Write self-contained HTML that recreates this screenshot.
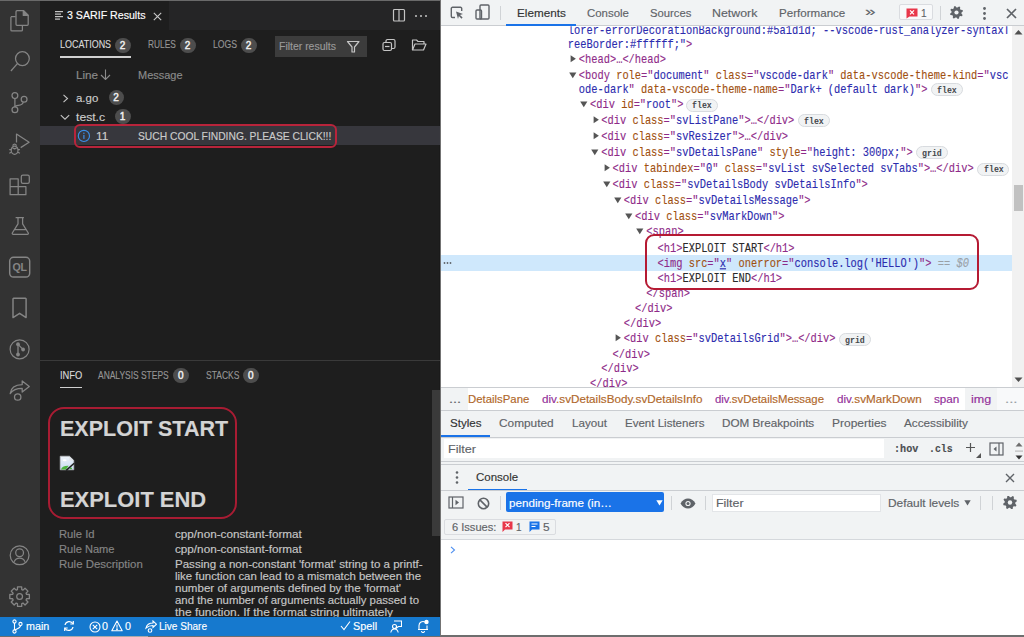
<!DOCTYPE html>
<html><head><meta charset="utf-8"><title>SARIF DevTools</title>
<style>
html,body{margin:0;padding:0;}
body{width:1024px;height:637px;overflow:hidden;position:relative;background:#ffffff;font-family:"Liberation Sans",sans-serif;}
</style></head><body>
<div style="position:absolute;left:0px;top:0px;width:441px;height:637px;background:#1e1e1e;"></div>
<div style="position:absolute;left:0px;top:0px;width:441px;height:1px;background:#6a6a6a;"></div>
<div style="position:absolute;left:0px;top:1px;width:40px;height:616px;background:#333333;"></div>
<div style="position:absolute;left:40px;top:1px;width:401px;height:29px;background:#252526;"></div>
<div style="position:absolute;left:40px;top:1px;width:129px;height:29px;background:#1e1e1e;"></div>
<div style="position:absolute;left:439px;top:30px;width:1px;height:587px;background:#1a1a1a;"></div>
<svg style="position:absolute;left:0px;top:0px;" width="40" height="637" viewBox="0 0 40 637">
<g fill="none" stroke="#858585" stroke-width="1.25" stroke-linejoin="round">
<path d="M11 16.6h4.6M10.9 16.7v13.2a1 1 0 0 0 1 1h9.5a1 1 0 0 0 1-1v-4.7"/>
<path d="M17 10.7h6.7l4.5 4.4v9.2a1 1 0 0 1-1 1h-10.2a1 1 0 0 1-1-1v-12.6a1 1 0 0 1 1-1z"/>
<path d="M23.3 11v4.4h4.6z" fill="#858585"/>
<circle cx="22.4" cy="58.6" r="6.9"/>
<path d="M17.6 63.3L10.9 71"/>
<circle cx="14.9" cy="95.6" r="2.9"/>
<circle cx="14.9" cy="109.8" r="2.9"/>
<circle cx="24.1" cy="99.3" r="2.9"/>
<path d="M14.9 98.5v8.4M23.3 102.1c-.6 2.4-2.5 3-5 3.3-2 .2-3.2.7-3.4 1.5"/>
<path d="M16.5 142.5v-8.4l12.6 8.2-8.4 5.3"/>
<ellipse cx="14.6" cy="150.3" rx="3.4" ry="4.1"/>
<path d="M11.8 147.5l2.8 1.4 2.8-1.4M9.3 149.5h2M9.3 153.2l2-1M19.9 149.5h-2M19.9 153.2l-2-1M12.6 145.6c.6-1 1.2-1.4 2-1.4s1.4.4 2 1.4"/>
<path d="M10.1 186.7h8.1v8h-8.1zM10.1 178.9h8.1v7.8h-8.1zM18.2 186.7h7.7v8h-7.7z"/>
<rect x="21.3" y="175.2" width="8" height="8.2" rx="1.6"/>
<path d="M15.6 217.6h8.3M18 217.8v6L12.3 233a1 1 0 0 0 .9 1.4h14.2a1 1 0 0 0 .9-1.4l-5.7-9.2v-6M14.6 229.5h11.4"/>
<rect x="9.7" y="257.3" width="20" height="19.8" rx="3.8" stroke-width="1.45"/>
<path d="M13.6 298.3h11.9a.6.6 0 0 1 .6.6v18.7l-6.5-4.3-6.6 4.3v-18.7a.6.6 0 0 1 .6-.6z" stroke-width="1.45"/>
<circle cx="19.6" cy="349.3" r="9.5" stroke-width="1.2"/>
<path d="M18 344.2v10.3M18 344.4l5 5" stroke-width="1.3"/>
<path d="M10.2 393.6c.6-5.6 5-8.9 12-9v-3.7l7.1 5.5-7.1 5.6v-3.6c-5.5 0-9.4 1.5-12 5.2z" stroke-width="1.3"/>
<circle cx="17.7" cy="397" r="3.2" stroke-width="1.3"/>
<circle cx="19.6" cy="555.3" r="9.4"/>
<circle cx="19.6" cy="552.8" r="3.9"/>
<path d="M14.2 561.7c1-2.4 3-3.7 5.4-3.7s4.4 1.3 5.4 3.7"/>
<polygon points="17.44,589.63 17.52,586.82 21.68,586.82 21.76,589.63 23.01,590.14 25.04,588.21 27.99,591.16 26.06,593.19 26.57,594.44 29.38,594.52 29.38,598.68 26.57,598.76 26.06,600.01 27.99,602.04 25.04,604.99 23.01,603.06 21.76,603.57 21.68,606.38 17.52,606.38 17.44,603.57 16.19,603.06 14.16,604.99 11.21,602.04 13.14,600.01 12.63,598.76 9.82,598.68 9.82,594.52 12.63,594.44 13.14,593.19 11.21,591.16 14.16,588.21 16.19,590.14" stroke-width="1.3"/>
<circle cx="19.6" cy="596.6" r="2.9"/>
</g>
<g fill="#858585"><circle cx="18" cy="344.2" r="1.9"/><circle cx="18" cy="354.5" r="1.9"/><circle cx="23.1" cy="349.5" r="1.9"/></g>
<text x="19.7" y="271.2" text-anchor="middle" font-family="Liberation Sans" font-weight="bold" font-size="10.6" fill="#858585" letter-spacing="-0.2">QL</text>
</svg>
<svg style="position:absolute;left:55px;top:11px;" width="9" height="9" viewBox="0 0 9 9"><g fill="#c5c5c5"><rect x="0" y="0" width="8" height="1.2"/><rect x="0" y="2.5" width="6" height="1.2"/><rect x="0" y="5" width="8" height="1.2"/><rect x="0" y="7.5" width="5" height="1.2"/></g></svg>
<div style="position:absolute;left:67.16px;top:9.25px;white-space:pre;line-height:normal;font-family:'Liberation Sans',sans-serif;font-size:10.6px;font-weight:400;color:#ffffff;-webkit-text-stroke:0.15px;transform:scaleX(1.0020);transform-origin:0 0;">3 SARIF Results</div>
<svg style="position:absolute;left:152.5px;top:11.5px;" width="9" height="9" viewBox="0 0 9 9"><path d="M0.8 0.8l7.4 7.4M8.2 0.8l-7.4 7.4" stroke="#c8c8c8" stroke-width="1.1"/></svg>
<svg style="position:absolute;left:392px;top:8px;" width="14" height="14" viewBox="0 0 14 14"><g fill="none" stroke="#c5c5c5" stroke-width="1.2"><rect x="1.5" y="1.5" width="11" height="11.5" rx="1"/><path d="M7 1.5v11.5"/></g></svg>
<svg style="position:absolute;left:414px;top:14px;" width="14" height="4" viewBox="0 0 14 4"><g fill="#c5c5c5"><circle cx="2" cy="2" r="1"/><circle cx="7" cy="2" r="1"/><circle cx="12" cy="2" r="1"/></g></svg>
<div style="position:absolute;left:59.86px;top:38.25px;white-space:pre;line-height:normal;font-family:'Liberation Sans',sans-serif;font-size:10.6px;font-weight:400;color:#dadada;-webkit-text-stroke:0.15px;transform:scaleX(0.8450);transform-origin:0 0;-webkit-text-stroke:0.12px">LOCATIONS</div>
<div style="position:absolute;left:60px;top:56.3px;width:71px;height:1.6px;background:#d0d0d0;"></div>
<div style="position:absolute;left:147.86px;top:38.25px;white-space:pre;line-height:normal;font-family:'Liberation Sans',sans-serif;font-size:10.6px;font-weight:400;color:#969696;-webkit-text-stroke:0.15px;transform:scaleX(0.7861);transform-origin:0 0;-webkit-text-stroke:0.12px">RULES</div>
<div style="position:absolute;left:212.86px;top:38.25px;white-space:pre;line-height:normal;font-family:'Liberation Sans',sans-serif;font-size:10.6px;font-weight:400;color:#969696;-webkit-text-stroke:0.15px;transform:scaleX(0.8207);transform-origin:0 0;-webkit-text-stroke:0.12px">LOGS</div>
<div style="position:absolute;left:115.25px;top:37.55px;width:15.5px;height:15.5px;background:#4d4d4d;border-radius:50%"></div>
<div style="position:absolute;left:119.80px;top:39.70px;white-space:pre;line-height:normal;font-family:'Liberation Sans',sans-serif;font-size:10px;font-weight:400;color:#f0f0f0;-webkit-text-stroke:0.15px;-webkit-text-stroke:0.45px">2</div>
<div style="position:absolute;left:180.25px;top:37.55px;width:15.5px;height:15.5px;background:#4d4d4d;border-radius:50%"></div>
<div style="position:absolute;left:184.80px;top:39.70px;white-space:pre;line-height:normal;font-family:'Liberation Sans',sans-serif;font-size:10px;font-weight:400;color:#f0f0f0;-webkit-text-stroke:0.15px;-webkit-text-stroke:0.45px">2</div>
<div style="position:absolute;left:241.25px;top:37.55px;width:15.5px;height:15.5px;background:#4d4d4d;border-radius:50%"></div>
<div style="position:absolute;left:245.80px;top:39.70px;white-space:pre;line-height:normal;font-family:'Liberation Sans',sans-serif;font-size:10px;font-weight:400;color:#f0f0f0;-webkit-text-stroke:0.15px;-webkit-text-stroke:0.45px">2</div>
<div style="position:absolute;left:275px;top:36px;width:92px;height:21px;background:#3c3c3c;"></div>
<div style="position:absolute;left:279.34px;top:39.58px;white-space:pre;line-height:normal;font-family:'Liberation Sans',sans-serif;font-size:11px;font-weight:400;color:#9a9a9a;-webkit-text-stroke:0.15px;transform:scaleX(0.9502);transform-origin:0 0;">Filter results</div>
<svg style="position:absolute;left:346px;top:40px;" width="15" height="13" viewBox="0 0 15 13"><path d="M1.5 1.5h11.5l-4.5 5.5v5h-2.5v-5z" fill="none" stroke="#c5c5c5" stroke-width="1.2" stroke-linejoin="round"/></svg>
<svg style="position:absolute;left:382px;top:38px;" width="14" height="14" viewBox="0 0 14 14"><g fill="none" stroke="#c5c5c5" stroke-width="1.2"><rect x="1" y="4.5" width="8.5" height="8" rx="1.5"/><path d="M4 4.5v-1.5a1.5 1.5 0 0 1 1.5-1.5h6a1.5 1.5 0 0 1 1.5 1.5v6a1.5 1.5 0 0 1-1.5 1.5h-2"/><path d="M3 8.5h4.5"/></g></svg>
<svg style="position:absolute;left:411px;top:38px;" width="16" height="14" viewBox="0 0 16 14"><g fill="none" stroke="#c5c5c5" stroke-width="1.2" stroke-linejoin="round"><path d="M1.5 12V2h4l1.5 1.5h6v2.5"/><path d="M1.5 12l2.5-6h11l-2.5 6z"/></g></svg>
<div style="position:absolute;left:76.36px;top:69.25px;white-space:pre;line-height:normal;font-family:'Liberation Sans',sans-serif;font-size:10.6px;font-weight:400;color:#8b8b8b;-webkit-text-stroke:0.15px;transform:scaleX(1.1019);transform-origin:0 0;">Line</div>
<svg style="position:absolute;left:100px;top:69px;" width="11" height="11" viewBox="0 0 11 11"><g fill="none" stroke="#8b8b8b" stroke-width="1.1"><path d="M5.5 0.5v10M1 6l4.5 4.5L10 6"/></g></svg>
<div style="position:absolute;left:138.11px;top:69.25px;white-space:pre;line-height:normal;font-family:'Liberation Sans',sans-serif;font-size:10.6px;font-weight:400;color:#8b8b8b;-webkit-text-stroke:0.15px;transform:scaleX(1.0354);transform-origin:0 0;">Message</div>
<svg style="position:absolute;left:62px;top:94px;" width="7" height="9" viewBox="0 0 7 9"><path d="M1.5 0.8l4 3.7-4 3.7" fill="none" stroke="#c5c5c5" stroke-width="1.1"/></svg>
<div style="position:absolute;left:76.36px;top:92.25px;white-space:pre;line-height:normal;font-family:'Liberation Sans',sans-serif;font-size:10.6px;font-weight:400;color:#cccccc;-webkit-text-stroke:0.15px;transform:scaleX(1.0799);transform-origin:0 0;">a.go</div>
<div style="position:absolute;left:108.65px;top:89.75px;width:15.5px;height:15.5px;background:#4d4d4d;border-radius:50%"></div>
<div style="position:absolute;left:113.20px;top:91.90px;white-space:pre;line-height:normal;font-family:'Liberation Sans',sans-serif;font-size:10px;font-weight:400;color:#f0f0f0;-webkit-text-stroke:0.15px;-webkit-text-stroke:0.45px">2</div>
<svg style="position:absolute;left:60px;top:114px;" width="10" height="7" viewBox="0 0 10 7"><path d="M0.8 1.2l4.2 4 4.2-4" fill="none" stroke="#c5c5c5" stroke-width="1.1"/></svg>
<div style="position:absolute;left:76.36px;top:110.85px;white-space:pre;line-height:normal;font-family:'Liberation Sans',sans-serif;font-size:10.6px;font-weight:400;color:#cccccc;-webkit-text-stroke:0.15px;transform:scaleX(1.1478);transform-origin:0 0;">test.c</div>
<div style="position:absolute;left:115.25px;top:108.55px;width:15.5px;height:15.5px;background:#4d4d4d;border-radius:50%"></div>
<div style="position:absolute;left:119.80px;top:110.70px;white-space:pre;line-height:normal;font-family:'Liberation Sans',sans-serif;font-size:10px;font-weight:400;color:#f0f0f0;-webkit-text-stroke:0.15px;-webkit-text-stroke:0.45px">1</div>
<div style="position:absolute;left:40px;top:126px;width:401px;height:19px;background:#37373d;"></div>
<div style="position:absolute;left:74px;top:124px;width:259px;height:20px;border:2px solid #b8243b;border-radius:6px;"></div>
<svg style="position:absolute;left:77px;top:128.5px;" width="14" height="14" viewBox="0 0 14 14"><circle cx="6.9" cy="6.9" r="5.6" fill="none" stroke="#3b8fe8" stroke-width="1.15"/><rect x="6.3" y="5.9" width="1.2" height="4" fill="#3b8fe8"/><circle cx="6.9" cy="4.2" r=".7" fill="#3b8fe8"/></svg>
<div style="position:absolute;left:95.61px;top:129.95px;white-space:pre;line-height:normal;font-family:'Liberation Sans',sans-serif;font-size:10.6px;font-weight:400;color:#cccccc;-webkit-text-stroke:0.15px;transform:scaleX(1.1111);transform-origin:0 0;">11</div>
<div style="position:absolute;left:138.11px;top:129.95px;white-space:pre;line-height:normal;font-family:'Liberation Sans',sans-serif;font-size:10.6px;font-weight:400;color:#cccccc;-webkit-text-stroke:0.15px;transform:scaleX(0.9706);transform-origin:0 0;">SUCH COOL FINDING. PLEASE CLICK!!!</div>
<div style="position:absolute;left:40px;top:360px;width:401px;height:1px;background:#3a3a3a;"></div>
<div style="position:absolute;left:59.86px;top:369.25px;white-space:pre;line-height:normal;font-family:'Liberation Sans',sans-serif;font-size:10.6px;font-weight:400;color:#dadada;-webkit-text-stroke:0.15px;transform:scaleX(0.8799);transform-origin:0 0;-webkit-text-stroke:0.12px">INFO</div>
<div style="position:absolute;left:60px;top:386.5px;width:22px;height:1.6px;background:#d0d0d0;"></div>
<div style="position:absolute;left:98.36px;top:369.25px;white-space:pre;line-height:normal;font-family:'Liberation Sans',sans-serif;font-size:10.6px;font-weight:400;color:#969696;-webkit-text-stroke:0.15px;transform:scaleX(0.7966);transform-origin:0 0;-webkit-text-stroke:0.12px">ANALYSIS STEPS</div>
<div style="position:absolute;left:173.45px;top:367.75px;width:15.5px;height:15.5px;background:#4d4d4d;border-radius:50%"></div>
<div style="position:absolute;left:178.00px;top:369.90px;white-space:pre;line-height:normal;font-family:'Liberation Sans',sans-serif;font-size:10px;font-weight:400;color:#f0f0f0;-webkit-text-stroke:0.15px;-webkit-text-stroke:0.45px">0</div>
<div style="position:absolute;left:205.86px;top:369.25px;white-space:pre;line-height:normal;font-family:'Liberation Sans',sans-serif;font-size:10.6px;font-weight:400;color:#969696;-webkit-text-stroke:0.15px;transform:scaleX(0.8044);transform-origin:0 0;-webkit-text-stroke:0.12px">STACKS</div>
<div style="position:absolute;left:243.45px;top:367.75px;width:15.5px;height:15.5px;background:#4d4d4d;border-radius:50%"></div>
<div style="position:absolute;left:248.00px;top:369.90px;white-space:pre;line-height:normal;font-family:'Liberation Sans',sans-serif;font-size:10px;font-weight:400;color:#f0f0f0;-webkit-text-stroke:0.15px;-webkit-text-stroke:0.45px">0</div>
<div style="position:absolute;left:48.2px;top:407.2px;width:185px;height:107.7px;border:2px solid #a81c33;border-radius:16px;"></div>
<div style="position:absolute;left:60.18px;top:415.66px;white-space:pre;line-height:normal;font-family:'Liberation Sans',sans-serif;font-size:22px;font-weight:700;color:#d4d4d4;-webkit-text-stroke:0.15px;transform:scaleX(0.9779);transform-origin:0 0;">EXPLOIT START</div>
<svg style="position:absolute;left:58px;top:454px;" width="18" height="18" viewBox="0 0 18 18"><defs><linearGradient id="sky" x1="0" y1="0" x2="0" y2="1"><stop offset="0" stop-color="#eef3fa"/><stop offset="1" stop-color="#c9dcf3"/></linearGradient></defs><path d="M2.2 2.2h9.2l4.4 4.2v9.4H2.2z" fill="url(#sky)" stroke="#b9bdc2" stroke-width=".7"/><path d="M11.4 2.2v4.2h4.4z" fill="#dfe3e8"/><ellipse cx="6.6" cy="6.2" rx="2" ry="1" fill="#ffffff"/><path d="M3 15.6c.4-2.6 3-4 7.6-3.9l-2.6 3.9z" fill="#4cb23f"/><ellipse cx="12.9" cy="14.4" rx="1.2" ry=".8" fill="#4cb23f"/><path d="M16.2 9.2L8.2 16.4" stroke="#1c1c1c" stroke-width="1.5"/></svg>
<div style="position:absolute;left:60.18px;top:486.76px;white-space:pre;line-height:normal;font-family:'Liberation Sans',sans-serif;font-size:22px;font-weight:700;color:#d4d4d4;-webkit-text-stroke:0.15px;transform:scaleX(0.9963);transform-origin:0 0;">EXPLOIT END</div>
<div style="position:absolute;left:59.36px;top:527.65px;white-space:pre;line-height:normal;font-family:'Liberation Sans',sans-serif;font-size:10.6px;font-weight:400;color:#858585;-webkit-text-stroke:0.15px;transform:scaleX(1.0594);transform-origin:0 0;">Rule Id</div>
<div style="position:absolute;left:59.36px;top:543.05px;white-space:pre;line-height:normal;font-family:'Liberation Sans',sans-serif;font-size:10.6px;font-weight:400;color:#858585;-webkit-text-stroke:0.15px;transform:scaleX(1.0466);transform-origin:0 0;">Rule Name</div>
<div style="position:absolute;left:59.36px;top:558.45px;white-space:pre;line-height:normal;font-family:'Liberation Sans',sans-serif;font-size:10.6px;font-weight:400;color:#858585;-webkit-text-stroke:0.15px;transform:scaleX(1.0777);transform-origin:0 0;">Rule Description</div>
<div style="position:absolute;left:174.56px;top:527.65px;white-space:pre;line-height:normal;font-family:'Liberation Sans',sans-serif;font-size:10.6px;font-weight:400;color:#c6c6c6;-webkit-text-stroke:0.15px;transform:scaleX(1.1049);transform-origin:0 0;">cpp/non-constant-format</div>
<div style="position:absolute;left:174.56px;top:543.05px;white-space:pre;line-height:normal;font-family:'Liberation Sans',sans-serif;font-size:10.6px;font-weight:400;color:#c6c6c6;-webkit-text-stroke:0.15px;transform:scaleX(1.1049);transform-origin:0 0;">cpp/non-constant-format</div>
<div style="position:absolute;left:174.56px;top:558.45px;white-space:pre;line-height:normal;font-family:'Liberation Sans',sans-serif;font-size:10.6px;font-weight:400;color:#c6c6c6;-webkit-text-stroke:0.15px;transform:scaleX(1.0900);transform-origin:0 0;">Passing a non-constant &#x27;format&#x27; string to a printf-</div>
<div style="position:absolute;left:174.56px;top:570.25px;white-space:pre;line-height:normal;font-family:'Liberation Sans',sans-serif;font-size:10.6px;font-weight:400;color:#c6c6c6;-webkit-text-stroke:0.15px;transform:scaleX(1.0769);transform-origin:0 0;">like function can lead to a mismatch between the</div>
<div style="position:absolute;left:174.56px;top:582.25px;white-space:pre;line-height:normal;font-family:'Liberation Sans',sans-serif;font-size:10.6px;font-weight:400;color:#c6c6c6;-webkit-text-stroke:0.15px;transform:scaleX(1.0910);transform-origin:0 0;">number of arguments defined by the &#x27;format&#x27;</div>
<div style="position:absolute;left:174.56px;top:594.15px;white-space:pre;line-height:normal;font-family:'Liberation Sans',sans-serif;font-size:10.6px;font-weight:400;color:#c6c6c6;-webkit-text-stroke:0.15px;transform:scaleX(1.0765);transform-origin:0 0;">and the number of arguments actually passed to</div>
<div style="position:absolute;left:174.56px;top:605.85px;white-space:pre;line-height:normal;font-family:'Liberation Sans',sans-serif;font-size:10.6px;font-weight:400;color:#c6c6c6;-webkit-text-stroke:0.15px;transform:scaleX(1.1257);transform-origin:0 0;">the function. If the format string ultimately</div>
<div style="position:absolute;left:432px;top:390px;width:9px;height:146px;background:#3a3a3a;"></div>
<div style="position:absolute;left:0px;top:617px;width:441px;height:18.5px;background:#1679ce;"></div>
<div style="position:absolute;left:0px;top:635.5px;width:1024px;height:1.5px;background:#6e6e6e;"></div>
<div style="position:absolute;left:40px;top:635.5px;width:108px;height:1.5px;background:#a9a9a9;"></div>
<svg style="position:absolute;left:12px;top:619px;" width="11" height="15" viewBox="0 0 11 15"><g fill="none" stroke="#ffffff" stroke-width="1.1"><circle cx="2.5" cy="2.5" r="1.6"/><circle cx="2.5" cy="12.5" r="1.6"/><circle cx="8.5" cy="5" r="1.6"/><path d="M2.5 4v7M8.5 6.5c0 3-4 3-5.5 4.7"/></g></svg>
<div style="position:absolute;left:26.26px;top:619.95px;white-space:pre;line-height:normal;font-family:'Liberation Sans',sans-serif;font-size:10.6px;font-weight:400;color:#ffffff;-webkit-text-stroke:0.15px;transform:scaleX(1.0176);transform-origin:0 0;">main</div>
<svg style="position:absolute;left:63px;top:620px;" width="12" height="12" viewBox="0 0 12 12"><g fill="none" stroke="#ffffff" stroke-width="1.2"><path d="M2 5a4.3 4.3 0 0 1 8-1.2M10 7a4.3 4.3 0 0 1-8 1.2"/><path d="M10.3 1v3h-3M1.7 11V8h3"/></g></svg>
<svg style="position:absolute;left:88.5px;top:620.5px;" width="12" height="12" viewBox="0 0 12 12"><g fill="none" stroke="#ffffff" stroke-width="1.1"><circle cx="6" cy="6" r="5"/><path d="M3.8 3.8l4.4 4.4M8.2 3.8L3.8 8.2"/></g></svg>
<div style="position:absolute;left:102.06px;top:619.95px;white-space:pre;line-height:normal;font-family:'Liberation Sans',sans-serif;font-size:10.6px;font-weight:400;color:#ffffff;-webkit-text-stroke:0.15px;transform:scaleX(1.0111);transform-origin:0 0;">0</div>
<svg style="position:absolute;left:111px;top:620px;" width="12" height="12" viewBox="0 0 12 12"><g fill="none" stroke="#ffffff" stroke-width="1.1"><path d="M6 1L11.2 10.8H0.8z" stroke-linejoin="round"/><path d="M6 4.5v3.3"/><circle cx="6" cy="9.2" r=".4"/></g></svg>
<div style="position:absolute;left:125.06px;top:619.95px;white-space:pre;line-height:normal;font-family:'Liberation Sans',sans-serif;font-size:10.6px;font-weight:400;color:#ffffff;-webkit-text-stroke:0.15px;transform:scaleX(1.0111);transform-origin:0 0;">0</div>
<svg style="position:absolute;left:145px;top:619.5px;" width="12" height="14" viewBox="0 0 12 14"><g fill="none" stroke="#ffffff" stroke-width="1.1"><path d="M1 8c.8-3.5 3.5-5 7-5V1l3.5 3.2L8 7.5V5.5c-3 0-5 .8-7 2.5z"/><circle cx="5" cy="10.5" r="1.8"/></g></svg>
<div style="position:absolute;left:158.76px;top:619.95px;white-space:pre;line-height:normal;font-family:'Liberation Sans',sans-serif;font-size:10.6px;font-weight:400;color:#ffffff;-webkit-text-stroke:0.15px;transform:scaleX(0.9490);transform-origin:0 0;">Live Share</div>
<svg style="position:absolute;left:340px;top:620px;" width="11" height="11" viewBox="0 0 11 11"><path d="M1 6l3 3.5L10 1.5" fill="none" stroke="#ffffff" stroke-width="1.1"/></svg>
<div style="position:absolute;left:352.96px;top:619.95px;white-space:pre;line-height:normal;font-family:'Liberation Sans',sans-serif;font-size:10.6px;font-weight:400;color:#ffffff;-webkit-text-stroke:0.15px;transform:scaleX(1.0216);transform-origin:0 0;">Spell</div>
<svg style="position:absolute;left:390px;top:619.5px;" width="12" height="13" viewBox="0 0 12 13"><g fill="none" stroke="#ffffff" stroke-width="1.1"><path d="M4 1h7.5v5.5H8.5L6.5 8V6.5"/><circle cx="4.5" cy="6.5" r="2"/><path d="M0.8 12.5c.5-2.5 2-3.5 3.7-3.5s3.2 1 3.7 3.5"/></g></svg>
<svg style="position:absolute;left:417px;top:619px;" width="12" height="14" viewBox="0 0 12 14"><g fill="none" stroke="#ffffff" stroke-width="1.1"><path d="M2 10.5V6.5a4 4 0 0 1 6-3.4M10 6.5v4M1 10.5h10"/><path d="M4.5 12a1.5 1.5 0 0 0 3 0"/></g><circle cx="9.5" cy="3" r="2.2" fill="#ffffff"/></svg>
<div style="position:absolute;left:441px;top:0px;width:583px;height:636px;background:#ffffff;"></div>
<div style="position:absolute;left:440px;top:0px;width:1px;height:636px;background:#737373;"></div>
<div style="position:absolute;left:441px;top:0px;width:583px;height:25.3px;background:#f1f3f4;"></div>
<div style="position:absolute;left:441px;top:25.3px;width:583px;height:1px;background:#cacdd1;"></div>
<svg style="position:absolute;left:450px;top:6px;" width="14" height="13" viewBox="0 0 14 13"><g fill="none" stroke="#5f6368" stroke-width="1.4"><path d="M5 11.5H2.5a1.2 1.2 0 0 1-1.2-1.2V2.5a1.2 1.2 0 0 1 1.2-1.2h8a1.2 1.2 0 0 1 1.2 1.2V5"/></g><path d="M6 5.5l7 2.6-3 .9 2.6 2.6-1.1 1.1L8.9 10.1 8 13z" fill="#5f6368"/></svg>
<svg style="position:absolute;left:475px;top:4px;" width="15" height="16" viewBox="0 0 15 16"><g fill="none" stroke="#5f6368" stroke-width="1.4"><rect x="5" y="1" width="9" height="14" rx="1"/><rect x="1" y="6" width="5.5" height="9" rx="1"/></g></svg>
<div style="position:absolute;left:500px;top:6px;width:1px;height:14px;background:#d0d3d6;"></div>
<div style="position:absolute;left:516.84px;top:6.98px;white-space:pre;line-height:normal;font-family:'Liberation Sans',sans-serif;font-size:11px;font-weight:400;color:#333333;-webkit-text-stroke:0.15px;transform:scaleX(1.0646);transform-origin:0 0;">Elements</div>
<div style="position:absolute;left:506.4px;top:23.5px;width:70px;height:2px;background:#1a73e8;"></div>
<div style="position:absolute;left:587.24px;top:6.98px;white-space:pre;line-height:normal;font-family:'Liberation Sans',sans-serif;font-size:11px;font-weight:400;color:#5f6368;-webkit-text-stroke:0.15px;transform:scaleX(1.0387);transform-origin:0 0;">Console</div>
<div style="position:absolute;left:649.84px;top:6.98px;white-space:pre;line-height:normal;font-family:'Liberation Sans',sans-serif;font-size:11px;font-weight:400;color:#5f6368;-webkit-text-stroke:0.15px;transform:scaleX(1.0238);transform-origin:0 0;">Sources</div>
<div style="position:absolute;left:712.34px;top:6.98px;white-space:pre;line-height:normal;font-family:'Liberation Sans',sans-serif;font-size:11px;font-weight:400;color:#5f6368;-webkit-text-stroke:0.15px;transform:scaleX(1.1233);transform-origin:0 0;">Network</div>
<div style="position:absolute;left:779.34px;top:6.98px;white-space:pre;line-height:normal;font-family:'Liberation Sans',sans-serif;font-size:11px;font-weight:400;color:#5f6368;-webkit-text-stroke:0.15px;transform:scaleX(1.0530);transform-origin:0 0;">Performance</div>
<div style="position:absolute;left:864.62px;top:4.24px;white-space:pre;line-height:normal;font-family:'Liberation Sans',sans-serif;font-size:13px;font-weight:400;color:#5f6368;-webkit-text-stroke:0.15px;transform:scaleX(1.4597);transform-origin:0 0;">»</div>
<div style="position:absolute;left:899px;top:4px;width:32px;height:14px;border:1px solid #dadce0;border-radius:2px;background:#f8f9fa"></div>
<svg style="position:absolute;left:906px;top:7.5px;" width="12" height="11" viewBox="0 0 12 11"><path d="M0.5 0.5h11v8h-8L0.5 10.5z" fill="#e8374a"/><path d="M4 2.3l4 4M8 2.3l-4 4" stroke="#fff" stroke-width="1.2"/></svg>
<div style="position:absolute;left:921.04px;top:6.98px;white-space:pre;line-height:normal;font-family:'Liberation Sans',sans-serif;font-size:11px;font-weight:400;color:#5f6368;-webkit-text-stroke:0.15px;transform:scaleX(0.9176);transform-origin:0 0;">1</div>
<div style="position:absolute;left:939.5px;top:6px;width:1px;height:14px;background:#d0d3d6;"></div>
<svg style="position:absolute;left:950px;top:6px;" width="13" height="13" viewBox="0 0 13 13"><polygon points="12.97,5.21 11.50,6.50 11.40,7.48 12.60,9.03 11.99,10.17 10.04,10.04 9.28,10.66 9.03,12.60 7.79,12.97 6.50,11.50 5.52,11.40 3.97,12.60 2.83,11.99 2.96,10.04 2.34,9.28 0.40,9.03 0.03,7.79 1.50,6.50 1.60,5.52 0.40,3.97 1.01,2.83 2.96,2.96 3.72,2.34 3.97,0.40 5.21,0.03 6.50,1.50 7.48,1.60 9.03,0.40 10.17,1.01 10.04,2.96 10.66,3.72 12.60,3.97" fill="#5f6368"/><circle cx="6.5" cy="6.5" r="2.1" fill="#f1f3f4"/></svg>
<svg style="position:absolute;left:981.5px;top:6.5px;" width="5" height="13" viewBox="0 0 5 13"><g fill="#5f6368"><circle cx="2.5" cy="1.5" r="1.4"/><circle cx="2.5" cy="6.5" r="1.4"/><circle cx="2.5" cy="11.5" r="1.4"/></g></svg>
<svg style="position:absolute;left:1006px;top:8px;" width="11" height="11" viewBox="0 0 11 11"><path d="M1 1l9 9M10 1l-9 9" stroke="#5f6368" stroke-width="1.7"/></svg>
<div style="position:absolute;left:1012px;top:26.3px;width:12px;height:361px;background:#f1f1f1;"></div>
<svg style="position:absolute;left:1014px;top:29px;" width="9" height="6" viewBox="0 0 9 6"><path d="M0.5 5.5L4.5 1l4 4.5z" fill="#505050"/></svg>
<svg style="position:absolute;left:1014px;top:377px;" width="9" height="6" viewBox="0 0 9 6"><path d="M0.5 0.5h8L4.5 5z" fill="#505050"/></svg>
<div style="position:absolute;left:1013.8px;top:185px;width:9.2px;height:25.5px;background:#c1c1c1;"></div>
<div style="position:absolute;left:441px;top:255.3px;width:571px;height:15.3px;background:#cfe8fc;"></div>
<svg style="position:absolute;left:443px;top:261px;" width="11" height="4" viewBox="0 0 11 4"><g fill="#5f6368"><circle cx="1.5" cy="2" r=".9"/><circle cx="4.5" cy="2" r=".9"/><circle cx="7.5" cy="2" r=".9"/></g></svg>
<div style="position:absolute;left:567.80px;top:25.12px;white-space:pre;line-height:normal;font-family:'Liberation Mono',monospace;font-size:10.390px;transform:scaleY(1.17);transform-origin:0 8.68px;-webkit-text-stroke:0.1px;clip-path:inset(2.27px 0 0 0);"><span style="color:#2b2bae;">lorer-errorDecorationBackground:#5a1d1d; --vscode-rust_analyzer-syntaxT</span></div>
<div style="position:absolute;left:567.80px;top:39.22px;white-space:pre;line-height:normal;font-family:'Liberation Mono',monospace;font-size:10.390px;transform:scaleY(1.17);transform-origin:0 8.68px;-webkit-text-stroke:0.1px;"><span style="color:#2b2bae;">reeBorder:#ffffff;&quot;</span><span style="color:#8e2a88;">&gt;</span></div>
<div style="position:absolute;left:578.80px;top:54.02px;white-space:pre;line-height:normal;font-family:'Liberation Mono',monospace;font-size:10.390px;transform:scaleY(1.17);transform-origin:0 8.68px;-webkit-text-stroke:0.1px;"><span style="color:#8e2a88;">&lt;head&gt;…&lt;/head&gt;</span></div>
<svg style="position:absolute;left:570.0px;top:54.9px;" width="6" height="8" viewBox="0 0 6 8"><path d="M0.6 0.3L5.9 3.8 0.6 7.3z" fill="#555555"/></svg>
<div style="position:absolute;left:578.80px;top:70.02px;white-space:pre;line-height:normal;font-family:'Liberation Mono',monospace;font-size:10.390px;transform:scaleY(1.17);transform-origin:0 8.68px;-webkit-text-stroke:0.1px;"><span style="color:#8e2a88;">&lt;body</span><span style="color:#9f5010;"> role</span><span style="color:#8e2a88;">=&quot;</span><span style="color:#2b2bae;">document</span><span style="color:#8e2a88;">&quot;</span><span style="color:#9f5010;"> class</span><span style="color:#8e2a88;">=&quot;</span><span style="color:#2b2bae;">vscode-dark</span><span style="color:#8e2a88;">&quot;</span><span style="color:#9f5010;"> data-vscode-theme-kind</span><span style="color:#8e2a88;">=&quot;</span><span style="color:#2b2bae;">vsc</span></div>
<svg style="position:absolute;left:568.9px;top:71.9px;" width="8" height="7" viewBox="0 0 8 7"><path d="M0.2 0.5h7.2L3.8 6.2z" fill="#555555"/></svg>
<div style="position:absolute;left:578.80px;top:84.22px;white-space:pre;line-height:normal;font-family:'Liberation Mono',monospace;font-size:10.390px;transform:scaleY(1.17);transform-origin:0 8.68px;-webkit-text-stroke:0.1px;"><span style="color:#2b2bae;">ode-dark</span><span style="color:#8e2a88;">&quot;</span><span style="color:#9f5010;"> data-vscode-theme-name</span><span style="color:#8e2a88;">=&quot;</span><span style="color:#2b2bae;">Dark+ (default dark)</span><span style="color:#8e2a88;">&quot;&gt;</span></div>
<div style="position:absolute;left:931.0px;top:83.3px;width:32px;height:13px;box-sizing:border-box;border:1px solid #d8dbdf;border-radius:6.5px;background:#f1f3f4;"></div>
<div style="position:absolute;left:937.36px;top:85.89px;white-space:pre;line-height:normal;font-family:'Liberation Mono',monospace;font-size:9.0px;font-weight:700;color:#45484c;-webkit-text-stroke:0.15px;transform:scaleX(0.9153);transform-origin:0 0;-webkit-text-stroke:0px">flex</div>
<div style="position:absolute;left:590.05px;top:99.22px;white-space:pre;line-height:normal;font-family:'Liberation Mono',monospace;font-size:10.390px;transform:scaleY(1.17);transform-origin:0 8.68px;-webkit-text-stroke:0.1px;"><span style="color:#8e2a88;">&lt;div</span><span style="color:#9f5010;"> id</span><span style="color:#8e2a88;">=&quot;</span><span style="color:#2b2bae;">root</span><span style="color:#8e2a88;">&quot;&gt;</span></div>
<svg style="position:absolute;left:580.15px;top:101.1px;" width="8" height="7" viewBox="0 0 8 7"><path d="M0.2 0.5h7.2L3.8 6.2z" fill="#555555"/></svg>
<div style="position:absolute;left:686.0px;top:98.6px;width:32px;height:13px;box-sizing:border-box;border:1px solid #d8dbdf;border-radius:6.5px;background:#f1f3f4;"></div>
<div style="position:absolute;left:692.36px;top:101.19px;white-space:pre;line-height:normal;font-family:'Liberation Mono',monospace;font-size:9.0px;font-weight:700;color:#45484c;-webkit-text-stroke:0.15px;transform:scaleX(0.9153);transform-origin:0 0;-webkit-text-stroke:0px">flex</div>
<div style="position:absolute;left:601.30px;top:114.92px;white-space:pre;line-height:normal;font-family:'Liberation Mono',monospace;font-size:10.390px;transform:scaleY(1.17);transform-origin:0 8.68px;-webkit-text-stroke:0.1px;"><span style="color:#8e2a88;">&lt;div</span><span style="color:#9f5010;"> class</span><span style="color:#8e2a88;">=&quot;</span><span style="color:#2b2bae;">svListPane</span><span style="color:#8e2a88;">&quot;&gt;…&lt;/div&gt;</span></div>
<svg style="position:absolute;left:592.5px;top:115.8px;" width="6" height="8" viewBox="0 0 6 8"><path d="M0.6 0.3L5.9 3.8 0.6 7.3z" fill="#555555"/></svg>
<div style="position:absolute;left:797.5px;top:114.0px;width:32px;height:13px;box-sizing:border-box;border:1px solid #d8dbdf;border-radius:6.5px;background:#f1f3f4;"></div>
<div style="position:absolute;left:803.86px;top:116.58px;white-space:pre;line-height:normal;font-family:'Liberation Mono',monospace;font-size:9.0px;font-weight:700;color:#45484c;-webkit-text-stroke:0.15px;transform:scaleX(0.9153);transform-origin:0 0;-webkit-text-stroke:0px">flex</div>
<div style="position:absolute;left:601.30px;top:131.42px;white-space:pre;line-height:normal;font-family:'Liberation Mono',monospace;font-size:10.390px;transform:scaleY(1.17);transform-origin:0 8.68px;-webkit-text-stroke:0.1px;"><span style="color:#8e2a88;">&lt;div</span><span style="color:#9f5010;"> class</span><span style="color:#8e2a88;">=&quot;</span><span style="color:#2b2bae;">svResizer</span><span style="color:#8e2a88;">&quot;&gt;…&lt;/div&gt;</span></div>
<svg style="position:absolute;left:592.5px;top:132.3px;" width="6" height="8" viewBox="0 0 6 8"><path d="M0.6 0.3L5.9 3.8 0.6 7.3z" fill="#555555"/></svg>
<div style="position:absolute;left:601.30px;top:147.42px;white-space:pre;line-height:normal;font-family:'Liberation Mono',monospace;font-size:10.390px;transform:scaleY(1.17);transform-origin:0 8.68px;-webkit-text-stroke:0.1px;"><span style="color:#8e2a88;">&lt;div</span><span style="color:#9f5010;"> class</span><span style="color:#8e2a88;">=&quot;</span><span style="color:#2b2bae;">svDetailsPane</span><span style="color:#8e2a88;">&quot;</span><span style="color:#9f5010;"> style</span><span style="color:#8e2a88;">=&quot;</span><span style="color:#2b2bae;">height: 300px;</span><span style="color:#8e2a88;">&quot;&gt;</span></div>
<svg style="position:absolute;left:591.4px;top:149.3px;" width="8" height="7" viewBox="0 0 8 7"><path d="M0.2 0.5h7.2L3.8 6.2z" fill="#555555"/></svg>
<div style="position:absolute;left:915.6px;top:146.4px;width:32px;height:13px;box-sizing:border-box;border:1px solid #d8dbdf;border-radius:6.5px;background:#f1f3f4;"></div>
<div style="position:absolute;left:921.96px;top:148.99px;white-space:pre;line-height:normal;font-family:'Liberation Mono',monospace;font-size:9.0px;font-weight:700;color:#45484c;-webkit-text-stroke:0.15px;transform:scaleX(0.9153);transform-origin:0 0;-webkit-text-stroke:0px">grid</div>
<div style="position:absolute;left:612.55px;top:162.92px;white-space:pre;line-height:normal;font-family:'Liberation Mono',monospace;font-size:10.390px;transform:scaleY(1.17);transform-origin:0 8.68px;-webkit-text-stroke:0.1px;"><span style="color:#8e2a88;">&lt;div</span><span style="color:#9f5010;"> tabindex</span><span style="color:#8e2a88;">=&quot;</span><span style="color:#2b2bae;">0</span><span style="color:#8e2a88;">&quot;</span><span style="color:#9f5010;"> class</span><span style="color:#8e2a88;">=&quot;</span><span style="color:#2b2bae;">svList svSelected svTabs</span><span style="color:#8e2a88;">&quot;&gt;…&lt;/div&gt;</span></div>
<svg style="position:absolute;left:603.75px;top:163.8px;" width="6" height="8" viewBox="0 0 6 8"><path d="M0.6 0.3L5.9 3.8 0.6 7.3z" fill="#555555"/></svg>
<div style="position:absolute;left:977.2px;top:162.6px;width:32px;height:13px;box-sizing:border-box;border:1px solid #d8dbdf;border-radius:6.5px;background:#f1f3f4;"></div>
<div style="position:absolute;left:983.56px;top:165.19px;white-space:pre;line-height:normal;font-family:'Liberation Mono',monospace;font-size:9.0px;font-weight:700;color:#45484c;-webkit-text-stroke:0.15px;transform:scaleX(0.9153);transform-origin:0 0;-webkit-text-stroke:0px">flex</div>
<div style="position:absolute;left:612.55px;top:179.12px;white-space:pre;line-height:normal;font-family:'Liberation Mono',monospace;font-size:10.390px;transform:scaleY(1.17);transform-origin:0 8.68px;-webkit-text-stroke:0.1px;"><span style="color:#8e2a88;">&lt;div</span><span style="color:#9f5010;"> class</span><span style="color:#8e2a88;">=&quot;</span><span style="color:#2b2bae;">svDetailsBody svDetailsInfo</span><span style="color:#8e2a88;">&quot;&gt;</span></div>
<svg style="position:absolute;left:602.65px;top:181.0px;" width="8" height="7" viewBox="0 0 8 7"><path d="M0.2 0.5h7.2L3.8 6.2z" fill="#555555"/></svg>
<div style="position:absolute;left:623.80px;top:195.12px;white-space:pre;line-height:normal;font-family:'Liberation Mono',monospace;font-size:10.390px;transform:scaleY(1.17);transform-origin:0 8.68px;-webkit-text-stroke:0.1px;"><span style="color:#8e2a88;">&lt;div</span><span style="color:#9f5010;"> class</span><span style="color:#8e2a88;">=&quot;</span><span style="color:#2b2bae;">svDetailsMessage</span><span style="color:#8e2a88;">&quot;&gt;</span></div>
<svg style="position:absolute;left:613.9px;top:197.0px;" width="8" height="7" viewBox="0 0 8 7"><path d="M0.2 0.5h7.2L3.8 6.2z" fill="#555555"/></svg>
<div style="position:absolute;left:635.05px;top:211.12px;white-space:pre;line-height:normal;font-family:'Liberation Mono',monospace;font-size:10.390px;transform:scaleY(1.17);transform-origin:0 8.68px;-webkit-text-stroke:0.1px;"><span style="color:#8e2a88;">&lt;div</span><span style="color:#9f5010;"> class</span><span style="color:#8e2a88;">=&quot;</span><span style="color:#2b2bae;">svMarkDown</span><span style="color:#8e2a88;">&quot;&gt;</span></div>
<svg style="position:absolute;left:625.15px;top:213.0px;" width="8" height="7" viewBox="0 0 8 7"><path d="M0.2 0.5h7.2L3.8 6.2z" fill="#555555"/></svg>
<div style="position:absolute;left:646.30px;top:226.22px;white-space:pre;line-height:normal;font-family:'Liberation Mono',monospace;font-size:10.390px;transform:scaleY(1.17);transform-origin:0 8.68px;-webkit-text-stroke:0.1px;"><span style="color:#8e2a88;">&lt;span&gt;</span></div>
<svg style="position:absolute;left:636.4px;top:228.1px;" width="8" height="7" viewBox="0 0 8 7"><path d="M0.2 0.5h7.2L3.8 6.2z" fill="#555555"/></svg>
<div style="position:absolute;left:657.55px;top:243.02px;white-space:pre;line-height:normal;font-family:'Liberation Mono',monospace;font-size:10.390px;transform:scaleY(1.17);transform-origin:0 8.68px;-webkit-text-stroke:0.1px;"><span style="color:#8e2a88;">&lt;h1&gt;</span><span style="color:#2a2a2a;">EXPLOIT START</span><span style="color:#8e2a88;">&lt;/h1&gt;</span></div>
<div style="position:absolute;left:657.55px;top:258.02px;white-space:pre;line-height:normal;font-family:'Liberation Mono',monospace;font-size:10.390px;transform:scaleY(1.17);transform-origin:0 8.68px;-webkit-text-stroke:0.1px;"><span style="color:#8e2a88;">&lt;img</span><span style="color:#9f5010;"> src</span><span style="color:#8e2a88;">=&quot;</span><span style="color:#2b2bae;text-decoration:underline">x</span><span style="color:#8e2a88;">&quot;</span><span style="color:#9f5010;"> onerror</span><span style="color:#8e2a88;">=&quot;</span><span style="color:#2b2bae;">console.log(&#x27;HELLO&#x27;)</span><span style="color:#8e2a88;">&quot;&gt;</span><span style="color:#9aa0a6;"> == </span><span style="color:#9aa0a6;font-style:italic">$0</span></div>
<div style="position:absolute;left:657.55px;top:273.12px;white-space:pre;line-height:normal;font-family:'Liberation Mono',monospace;font-size:10.390px;transform:scaleY(1.17);transform-origin:0 8.68px;-webkit-text-stroke:0.1px;"><span style="color:#8e2a88;">&lt;h1&gt;</span><span style="color:#2a2a2a;">EXPLOIT END</span><span style="color:#8e2a88;">&lt;/h1&gt;</span></div>
<div style="position:absolute;left:646.30px;top:287.62px;white-space:pre;line-height:normal;font-family:'Liberation Mono',monospace;font-size:10.390px;transform:scaleY(1.17);transform-origin:0 8.68px;-webkit-text-stroke:0.1px;"><span style="color:#8e2a88;">&lt;/span&gt;</span></div>
<div style="position:absolute;left:635.05px;top:302.82px;white-space:pre;line-height:normal;font-family:'Liberation Mono',monospace;font-size:10.390px;transform:scaleY(1.17);transform-origin:0 8.68px;-webkit-text-stroke:0.1px;"><span style="color:#8e2a88;">&lt;/div&gt;</span></div>
<div style="position:absolute;left:623.80px;top:318.02px;white-space:pre;line-height:normal;font-family:'Liberation Mono',monospace;font-size:10.390px;transform:scaleY(1.17);transform-origin:0 8.68px;-webkit-text-stroke:0.1px;"><span style="color:#8e2a88;">&lt;/div&gt;</span></div>
<div style="position:absolute;left:623.80px;top:333.02px;white-space:pre;line-height:normal;font-family:'Liberation Mono',monospace;font-size:10.390px;transform:scaleY(1.17);transform-origin:0 8.68px;-webkit-text-stroke:0.1px;"><span style="color:#8e2a88;">&lt;div</span><span style="color:#9f5010;"> class</span><span style="color:#8e2a88;">=&quot;</span><span style="color:#2b2bae;">svDetailsGrid</span><span style="color:#8e2a88;">&quot;&gt;…&lt;/div&gt;</span></div>
<svg style="position:absolute;left:615.0px;top:333.9px;" width="6" height="8" viewBox="0 0 6 8"><path d="M0.6 0.3L5.9 3.8 0.6 7.3z" fill="#555555"/></svg>
<div style="position:absolute;left:838.5px;top:333.0px;width:32px;height:13px;box-sizing:border-box;border:1px solid #d8dbdf;border-radius:6.5px;background:#f1f3f4;"></div>
<div style="position:absolute;left:844.86px;top:335.59px;white-space:pre;line-height:normal;font-family:'Liberation Mono',monospace;font-size:9.0px;font-weight:700;color:#45484c;-webkit-text-stroke:0.15px;transform:scaleX(0.9153);transform-origin:0 0;-webkit-text-stroke:0px">grid</div>
<div style="position:absolute;left:612.55px;top:349.02px;white-space:pre;line-height:normal;font-family:'Liberation Mono',monospace;font-size:10.390px;transform:scaleY(1.17);transform-origin:0 8.68px;-webkit-text-stroke:0.1px;"><span style="color:#8e2a88;">&lt;/div&gt;</span></div>
<div style="position:absolute;left:601.30px;top:363.32px;white-space:pre;line-height:normal;font-family:'Liberation Mono',monospace;font-size:10.390px;transform:scaleY(1.17);transform-origin:0 8.68px;-webkit-text-stroke:0.1px;"><span style="color:#8e2a88;">&lt;/div&gt;</span></div>
<div style="position:absolute;left:590.05px;top:377.92px;white-space:pre;line-height:normal;font-family:'Liberation Mono',monospace;font-size:10.390px;transform:scaleY(1.17);transform-origin:0 8.68px;-webkit-text-stroke:0.1px;"><span style="color:#8e2a88;">&lt;/div&gt;</span></div>
<div style="position:absolute;left:644.8px;top:234.4px;width:330.5px;height:51.3px;border:2px solid #b51a33;border-radius:9px;"></div>
<div style="position:absolute;left:441px;top:387px;width:583px;height:1px;background:#cacdd1;"></div>
<div style="position:absolute;left:441px;top:388px;width:583px;height:22px;background:#ffffff;"></div>
<div style="position:absolute;left:441px;top:388px;width:27px;height:22px;background:#f1f3f4;"></div>
<div style="position:absolute;left:449.14px;top:392.88px;white-space:pre;line-height:normal;font-family:'Liberation Sans',sans-serif;font-size:11px;font-weight:400;color:#5f6368;-webkit-text-stroke:0.15px;transform:scaleX(1.3105);transform-origin:0 0;">...</div>
<div style="position:absolute;left:467.64px;top:392.88px;white-space:pre;line-height:normal;font-family:'Liberation Sans',sans-serif;font-size:11px;font-weight:400;color:#000;-webkit-text-stroke:0.15px;transform:scaleX(1.0336);transform-origin:0 0;"><span style="color:#b0672a">DetailsPane</span></div>
<div style="position:absolute;left:541.84px;top:392.88px;white-space:pre;line-height:normal;font-family:'Liberation Sans',sans-serif;font-size:11px;font-weight:400;color:#000;-webkit-text-stroke:0.15px;transform:scaleX(1.0608);transform-origin:0 0;"><span style="color:#93309a">div</span><span style="color:#b0672a">.svDetailsBody.svDetailsInfo</span></div>
<div style="position:absolute;left:714.64px;top:392.88px;white-space:pre;line-height:normal;font-family:'Liberation Sans',sans-serif;font-size:11px;font-weight:400;color:#000;-webkit-text-stroke:0.15px;transform:scaleX(1.0326);transform-origin:0 0;"><span style="color:#93309a">div</span><span style="color:#b0672a">.svDetailsMessage</span></div>
<div style="position:absolute;left:836.64px;top:392.88px;white-space:pre;line-height:normal;font-family:'Liberation Sans',sans-serif;font-size:11px;font-weight:400;color:#000;-webkit-text-stroke:0.15px;transform:scaleX(1.0607);transform-origin:0 0;"><span style="color:#93309a">div</span><span style="color:#b0672a">.svMarkDown</span></div>
<div style="position:absolute;left:933.74px;top:392.88px;white-space:pre;line-height:normal;font-family:'Liberation Sans',sans-serif;font-size:11px;font-weight:400;color:#000;-webkit-text-stroke:0.15px;transform:scaleX(1.0612);transform-origin:0 0;"><span style="color:#93309a">span</span></div>
<div style="position:absolute;left:965px;top:388px;width:32.4px;height:22px;background:#f1f3f4;"></div>
<div style="position:absolute;left:970.84px;top:392.88px;white-space:pre;line-height:normal;font-family:'Liberation Sans',sans-serif;font-size:11px;font-weight:400;color:#000;-webkit-text-stroke:0.15px;transform:scaleX(1.1402);transform-origin:0 0;"><span style="color:#93309a">img</span></div>
<div style="position:absolute;left:997.4px;top:388px;width:26.6px;height:22px;background:#f8f9fa;"></div>
<div style="position:absolute;left:1004.54px;top:392.88px;white-space:pre;line-height:normal;font-family:'Liberation Sans',sans-serif;font-size:11px;font-weight:400;color:#9aa0a6;-webkit-text-stroke:0.15px;transform:scaleX(1.3650);transform-origin:0 0;">...</div>
<div style="position:absolute;left:441px;top:410px;width:583px;height:1px;background:#cacdd1;"></div>
<div style="position:absolute;left:441px;top:411px;width:583px;height:25.6px;background:#f1f3f4;"></div>
<div style="position:absolute;left:450.04px;top:416.78px;white-space:pre;line-height:normal;font-family:'Liberation Sans',sans-serif;font-size:11px;font-weight:400;color:#333333;-webkit-text-stroke:0.15px;transform:scaleX(1.0551);transform-origin:0 0;">Styles</div>
<div style="position:absolute;left:441px;top:434.7px;width:49px;height:2px;background:#1a73e8;"></div>
<div style="position:absolute;left:498.94px;top:416.78px;white-space:pre;line-height:normal;font-family:'Liberation Sans',sans-serif;font-size:11px;font-weight:400;color:#5f6368;-webkit-text-stroke:0.15px;transform:scaleX(1.0759);transform-origin:0 0;">Computed</div>
<div style="position:absolute;left:571.74px;top:416.78px;white-space:pre;line-height:normal;font-family:'Liberation Sans',sans-serif;font-size:11px;font-weight:400;color:#5f6368;-webkit-text-stroke:0.15px;transform:scaleX(1.0572);transform-origin:0 0;">Layout</div>
<div style="position:absolute;left:624.84px;top:416.78px;white-space:pre;line-height:normal;font-family:'Liberation Sans',sans-serif;font-size:11px;font-weight:400;color:#5f6368;-webkit-text-stroke:0.15px;transform:scaleX(1.0474);transform-origin:0 0;">Event Listeners</div>
<div style="position:absolute;left:721.84px;top:416.78px;white-space:pre;line-height:normal;font-family:'Liberation Sans',sans-serif;font-size:11px;font-weight:400;color:#5f6368;-webkit-text-stroke:0.15px;transform:scaleX(1.0623);transform-origin:0 0;">DOM Breakpoints</div>
<div style="position:absolute;left:832.14px;top:416.78px;white-space:pre;line-height:normal;font-family:'Liberation Sans',sans-serif;font-size:11px;font-weight:400;color:#5f6368;-webkit-text-stroke:0.15px;transform:scaleX(1.0893);transform-origin:0 0;">Properties</div>
<div style="position:absolute;left:904.34px;top:416.78px;white-space:pre;line-height:normal;font-family:'Liberation Sans',sans-serif;font-size:11px;font-weight:400;color:#5f6368;-webkit-text-stroke:0.15px;transform:scaleX(1.0670);transform-origin:0 0;">Accessibility</div>
<div style="position:absolute;left:441px;top:436.6px;width:583px;height:1px;background:#cacdd1;"></div>
<div style="position:absolute;left:441px;top:437.6px;width:583px;height:23.5px;background:#f1f3f4;"></div>
<div style="position:absolute;left:444px;top:438.6px;width:439.6px;height:19.4px;background:#ffffff;"></div>
<div style="position:absolute;left:447.54px;top:442.58px;white-space:pre;line-height:normal;font-family:'Liberation Sans',sans-serif;font-size:11px;font-weight:400;color:#5f6368;-webkit-text-stroke:0.15px;transform:scaleX(1.1418);transform-origin:0 0;">Filter</div>
<div style="position:absolute;left:894.07px;top:443.13px;white-space:pre;line-height:normal;font-family:'Liberation Mono',monospace;font-size:10.5px;font-weight:700;color:#4a4d51;-webkit-text-stroke:0.15px;transform:scaleX(0.9640);transform-origin:0 0;">:hov</div>
<div style="position:absolute;left:928.87px;top:443.13px;white-space:pre;line-height:normal;font-family:'Liberation Mono',monospace;font-size:10.5px;font-weight:700;color:#4a4d51;-webkit-text-stroke:0.15px;transform:scaleX(0.9342);transform-origin:0 0;">.cls</div>
<svg style="position:absolute;left:965px;top:442px;" width="17" height="17" viewBox="0 0 17 17"><path d="M5.5 1v9M1 5.5h9" stroke="#555" stroke-width="1.2"/><path d="M16 11v5h-5z" fill="#555"/></svg>
<svg style="position:absolute;left:989px;top:442px;" width="15" height="14" viewBox="0 0 15 14"><g fill="none" stroke="#5f6368" stroke-width="1.2"><rect x="1" y="1" width="13" height="12"/><path d="M10 1v12"/></g><path d="M7.5 4.5v5L4.5 7z" fill="#5f6368"/></svg>
<svg style="position:absolute;left:1015px;top:441px;" width="8" height="20" viewBox="0 0 8 20"><path d="M0.5 5.5L4 1.5l3.5 4z" fill="#6e6e6e"/><path d="M0.5 14.5h7L4 18.5z" fill="#333"/><rect x="0" y="9.5" width="8" height="1.2" fill="#bbb"/></svg>
<div style="position:absolute;left:441px;top:461.2px;width:583px;height:1px;background:#cacdd1;"></div>
<div style="position:absolute;left:441px;top:462.2px;width:583px;height:2.4px;background:#f1f3f4;"></div>
<div style="position:absolute;left:441px;top:464px;width:583px;height:1px;background:#cacdd1;"></div>
<div style="position:absolute;left:441px;top:465px;width:583px;height:25.3px;background:#f1f3f4;"></div>
<svg style="position:absolute;left:455px;top:471px;" width="4" height="13" viewBox="0 0 4 13"><g fill="#5f6368"><circle cx="2" cy="1.5" r="1.3"/><circle cx="2" cy="6.5" r="1.3"/><circle cx="2" cy="11.5" r="1.3"/></g></svg>
<div style="position:absolute;left:476.04px;top:471.18px;white-space:pre;line-height:normal;font-family:'Liberation Sans',sans-serif;font-size:11px;font-weight:400;color:#333333;-webkit-text-stroke:0.15px;transform:scaleX(1.0436);transform-origin:0 0;">Console</div>
<div style="position:absolute;left:468px;top:488.5px;width:59px;height:2px;background:#1a73e8;"></div>
<svg style="position:absolute;left:1005px;top:472.5px;" width="10" height="10" viewBox="0 0 10 10"><path d="M1 1l8 8M9 1l-8 8" stroke="#5f6368" stroke-width="1.4"/></svg>
<div style="position:absolute;left:441px;top:490.3px;width:583px;height:1px;background:#cacdd1;"></div>
<div style="position:absolute;left:441px;top:491.3px;width:583px;height:47.7px;background:#f1f3f4;"></div>
<svg style="position:absolute;left:448px;top:496px;" width="16" height="13" viewBox="0 0 16 13"><g fill="none" stroke="#5f6368" stroke-width="1.2"><rect x="1" y="1" width="14" height="11"/><path d="M4.5 1v11"/></g><path d="M7.5 3.8v5.4L11 6.5z" fill="#5f6368"/></svg>
<svg style="position:absolute;left:476.5px;top:496.5px;" width="13" height="13" viewBox="0 0 13 13"><g fill="none" stroke="#5f6368" stroke-width="1.6"><circle cx="6.5" cy="6.5" r="5.2"/><path d="M2.9 2.9l7.2 7.2"/></g></svg>
<div style="position:absolute;left:500px;top:496px;width:1px;height:14px;background:#d0d3d6;"></div>
<div style="position:absolute;left:506.4px;top:492.2px;width:158.1px;height:20.1px;background:#1a73e8;border-radius:2px"></div>
<div style="position:absolute;left:509.34px;top:496.88px;white-space:pre;line-height:normal;font-family:'Liberation Sans',sans-serif;font-size:11px;font-weight:400;color:#ffffff;-webkit-text-stroke:0.15px;transform:scaleX(1.0576);transform-origin:0 0;">pending-frame (in…</div>
<svg style="position:absolute;left:655.5px;top:500px;" width="7" height="6" viewBox="0 0 7 6"><path d="M0.3 0.3h6.4L3.5 5.5z" fill="#fff"/></svg>
<div style="position:absolute;left:671px;top:496px;width:1px;height:14px;background:#d0d3d6;"></div>
<svg style="position:absolute;left:680px;top:497.5px;" width="16" height="11" viewBox="0 0 16 11"><path d="M0.5 5.5C2.5 2 5 0.6 8 0.6s5.5 1.4 7.5 4.9C13.5 9 11 10.4 8 10.4S2.5 9 0.5 5.5z" fill="#5f6368"/><circle cx="8" cy="5.5" r="2.6" fill="#f1f3f4"/><circle cx="8" cy="5.5" r="1.5" fill="#5f6368"/></svg>
<div style="position:absolute;left:705px;top:496px;width:1px;height:14px;background:#d0d3d6;"></div>
<div style="position:absolute;left:712px;top:493.6px;width:168.6px;height:18.7px;box-sizing:border-box;border:1px solid #e3e5e8;background:#fff"></div>
<div style="position:absolute;left:716.04px;top:497.18px;white-space:pre;line-height:normal;font-family:'Liberation Sans',sans-serif;font-size:11px;font-weight:400;color:#5f6368;-webkit-text-stroke:0.15px;transform:scaleX(1.1295);transform-origin:0 0;">Filter</div>
<div style="position:absolute;left:888.14px;top:496.78px;white-space:pre;line-height:normal;font-family:'Liberation Sans',sans-serif;font-size:11px;font-weight:400;color:#5f6368;-webkit-text-stroke:0.15px;transform:scaleX(1.0798);transform-origin:0 0;">Default levels</div>
<svg style="position:absolute;left:964px;top:500px;" width="7" height="6" viewBox="0 0 7 6"><path d="M0.3 0.3h6.4L3.5 5.5z" fill="#5f6368"/></svg>
<div style="position:absolute;left:979.5px;top:496px;width:1px;height:14px;background:#d0d3d6;"></div>
<div style="position:absolute;left:992px;top:496px;width:1px;height:14px;background:#d0d3d6;"></div>
<svg style="position:absolute;left:1002.5px;top:496px;" width="14" height="13" viewBox="0 0 14 13"><polygon points="13.87,5.13 12.30,6.50 12.20,7.53 13.47,9.18 12.82,10.39 10.75,10.25 9.94,10.91 9.68,12.97 8.37,13.37 7.00,11.80 5.97,11.70 4.32,12.97 3.11,12.32 3.25,10.25 2.59,9.44 0.53,9.18 0.13,7.87 1.70,6.50 1.80,5.47 0.53,3.82 1.18,2.61 3.25,2.75 4.06,2.09 4.32,0.03 5.63,-0.37 7.00,1.20 8.03,1.30 9.68,0.03 10.89,0.68 10.75,2.75 11.41,3.56 13.47,3.82" fill="#5f6368"/><circle cx="7" cy="6.5" r="2.2" fill="#f1f3f4"/></svg>
<div style="position:absolute;left:444px;top:518.6px;width:111.6px;height:16px;box-sizing:border-box;border:1px solid #dadce0;border-radius:2px;background:#f1f3f4"></div>
<div style="position:absolute;left:452.04px;top:521.18px;white-space:pre;line-height:normal;font-family:'Liberation Sans',sans-serif;font-size:11px;font-weight:400;color:#5f6368;-webkit-text-stroke:0.15px;transform:scaleX(1.0066);transform-origin:0 0;">6 Issues:</div>
<svg style="position:absolute;left:502px;top:520.5px;" width="11" height="12" viewBox="0 0 11 12"><path d="M0.5 0.5h10v8h-7.5L0.5 11z" fill="#e8374a"/><path d="M3.5 2.2l4 4M7.5 2.2l-4 4" stroke="#fff" stroke-width="1.2"/></svg>
<div style="position:absolute;left:516.14px;top:521.18px;white-space:pre;line-height:normal;font-family:'Liberation Sans',sans-serif;font-size:11px;font-weight:400;color:#5f6368;-webkit-text-stroke:0.15px;transform:scaleX(0.9012);transform-origin:0 0;">1</div>
<svg style="position:absolute;left:528.5px;top:520.5px;" width="11" height="12" viewBox="0 0 11 12"><path d="M0.5 0.5h10v8h-7.5L0.5 11z" fill="#1a73e8"/><path d="M2.5 3h6M2.5 5.5h4" stroke="#fff" stroke-width="1.1"/></svg>
<div style="position:absolute;left:542.84px;top:521.18px;white-space:pre;line-height:normal;font-family:'Liberation Sans',sans-serif;font-size:11px;font-weight:400;color:#5f6368;-webkit-text-stroke:0.15px;transform:scaleX(1.0808);transform-origin:0 0;">5</div>
<div style="position:absolute;left:441px;top:539px;width:583px;height:1px;background:#d5d8dc;"></div>
<svg style="position:absolute;left:450px;top:546px;" width="6" height="8" viewBox="0 0 6 8"><path d="M1 0.8L4.5 4 1 7.2" fill="none" stroke="#4d8ff0" stroke-width="1.1"/></svg>
<div style="position:absolute;left:441px;top:635px;width:583px;height:2px;background:#6e6e6e;"></div>
</body></html>
